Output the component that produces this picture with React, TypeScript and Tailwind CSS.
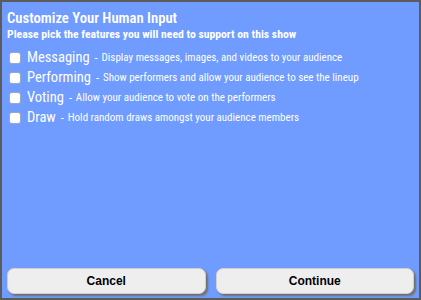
import React from "react";

const items = [
  { name: "Messaging", desc: "Display messages, images, and videos to your audience" },
  { name: "Performing", desc: "Show performers and allow your audience to see the lineup" },
  { name: "Voting", desc: "Allow your audience to vote on the performers" },
  { name: "Draw", desc: "Hold random draws amongst your audience members" },
];

export default function App() {
  return (
    <div
      className="w-[421px] h-[300px] bg-[#6f9cfe] border-2 border-[#5b5b5b] flex flex-col text-white"
      style={{ fontFamily: '"Roboto Condensed", "Liberation Sans Narrow", Roboto, sans-serif' }}
    >
      <div className="px-[5px] pt-[7px] flex flex-col">
        <div className="text-[14.7px] leading-[18px] font-semibold">Customize Your Human Input</div>
        <div className="text-[11.7px] leading-[14px] font-bold">Please pick the features you will need to support on this show</div>
        <div className="flex flex-col mt-[7px]">
          {items.map((it) => (
            <label key={it.name} className="flex items-center h-[20px]">
              <span className="w-[12px] h-[12px] bg-white rounded-[3px] border border-[#9aa7c0] ml-[2px] mr-[6px]" />
              <span className="text-[14.5px] leading-[20px]">{it.name}</span>
              <span className="text-[12px] ml-[5px] mr-[4px]">-</span>
              <span className="text-[11px] leading-[20px]">{it.desc}</span>
            </label>
          ))}
        </div>
      </div>
      <div className="flex-1" />
      <div className="flex gap-[10px] px-[5px] pb-[4px]">
        {["Cancel", "Continue"].map((b) => (
          <button
            key={b}
            className="flex-1 h-[26px] rounded-[7px] bg-[#eeeeee] text-black text-[12px] font-bold shadow-[2px_2px_2px_#707070] border border-[#d0d0d0]"
            style={{ fontFamily: '"Liberation Sans", Arial, sans-serif' }}
          >
            {b}
          </button>
        ))}
      </div>
    </div>
  );
}
